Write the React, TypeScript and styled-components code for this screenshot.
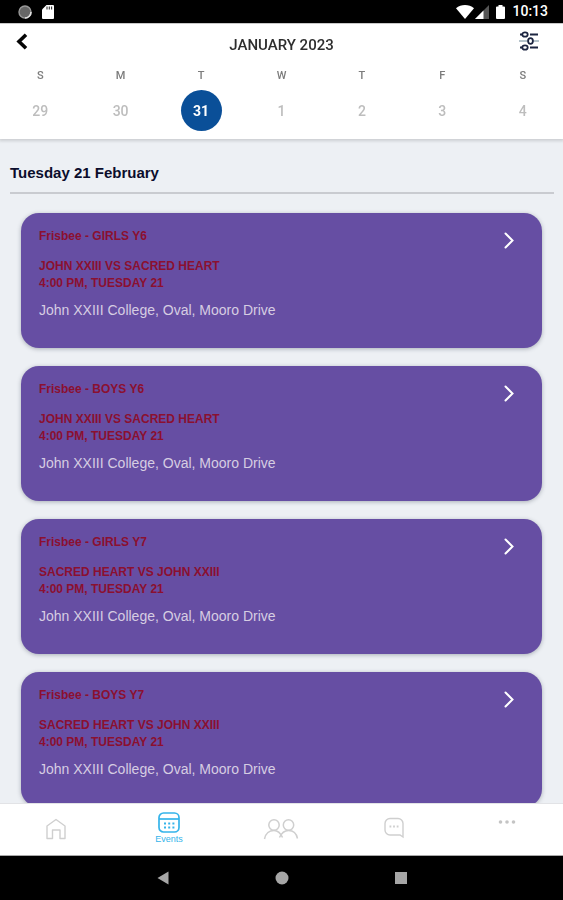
import React from "react";
import styled, { createGlobalStyle } from "styled-components";

const GlobalStyle = createGlobalStyle`
  * { box-sizing: border-box; }
  body { margin: 0; background: #edf0f4; }
  button { border: 0; padding: 0; background: none; font: inherit; color: inherit; cursor: pointer; }
  h1, h2, h3, p, ul { margin: 0; padding: 0; font-weight: inherit; }
  svg { display: block; }
`;

const Screen = styled.div`
  display: flex;
  flex-direction: column;
  height: 100vh;
  overflow: hidden;
  font-family: "Liberation Sans", Arial, sans-serif;
`;

const StatusBar = styled.div`
  flex: none;
  display: flex;
  align-items: center;
  justify-content: space-between;
  height: 23px;
  padding: 0 15px 0 18px;
  background: #000;
  color: #fff;
  font: 500 14px/23px Roboto, sans-serif;
`;

const StatusGroup = styled.div<{ $gap: number }>`
  display: flex;
  align-items: center;
  gap: ${(p) => p.$gap}px;
`;

const Header = styled.header`
  flex: none;
  position: relative;
  padding-bottom: 8px;
  background: #fff;
  font-family: Roboto, sans-serif;
  border-top: 1px solid #c8c8c8;
  box-shadow: 0 1px 3px 1px rgba(0, 0, 0, 0.14);
`;

const TitleRow = styled.div`
  display: grid;
  grid-template-columns: 40px 1fr 40px;
  align-items: center;
  height: 40px;
  padding: 0 14px 0 2px;
`;

const Title = styled.h1`
  padding-left: 12px;
  padding-top: 2px;
  font-size: 15px;
  font-weight: 500;
  line-height: 20px;
  text-align: center;
  color: #2e2e2e;
`;

const IconButton = styled.button`
  display: flex;
  justify-content: center;
  padding: 4px 0 10px;
`;

const Week = styled.div`
  display: grid;
  grid-template-columns: repeat(7, 1fr);
  justify-items: center;
`;

const Weekday = styled.span`
  padding: 1px 0 3px;
  font-size: 11px;
  font-weight: 500;
  line-height: 22px;
  color: #7c7c7c;
`;

const DayButton = styled.button<{ $selected: boolean }>`
  width: 41px;
  height: 41px;
  border-radius: 50%;
  background: ${(p) => (p.$selected ? "#0a4f98" : "transparent")};
  && {
    font-size: 14px;
    font-weight: ${(p) => (p.$selected ? 700 : 500)};
    color: ${(p) => (p.$selected ? "#fff" : "#bdbdbd")};
  }
`;

const Content = styled.main`
  flex: 1;
  min-height: 0;
  overflow-y: auto;
  scrollbar-width: none;
  padding: 20px 9px 0 10px;
  background: #edf0f4;
`;

const DateHeading = styled.h2`
  padding: 4px 0 9px;
  border-bottom: 2px solid #c9cbd0;
  font-size: 15px;
  font-weight: 700;
  line-height: 20px;
  color: #0b0d2c;
`;

const EventList = styled.ul`
  display: flex;
  flex-direction: column;
  gap: 18px;
  padding: 19px 12px 18px 11px;
  list-style: none;
`;

const Card = styled.button`
  display: flex;
  justify-content: space-between;
  align-items: flex-start;
  width: 100%;
  min-height: 135px;
  padding: 15px 26px 16px 18px;
  border-radius: 18px;
  background: #664ea3;
  text-align: left;
  box-shadow: 0 1px 4px rgba(40, 50, 70, 0.35);
`;

const CardText = styled.div`
  display: flex;
  flex-direction: column;
  min-width: 0;
`;

const Category = styled.h3`
  margin-bottom: 13px;
  font-size: 12px;
  font-weight: 700;
  line-height: 17px;
  color: #8b1030;
`;

const Fixture = styled.p`
  font-size: 12px;
  font-weight: 700;
  line-height: 17px;
  color: #8b1030;
`;

const Venue = styled.p`
  margin-top: 9px;
  font-size: 14px;
  line-height: 18px;
  color: #d6cde2;
`;

const ChevronSlot = styled.span`
  padding-top: 4px;
`;

const TabBar = styled.nav`
  flex: none;
  display: grid;
  grid-template-columns: repeat(5, 1fr);
  height: 53px;
  background: #fff;
  border-top: 1px solid #e2e3e6;
  border-bottom: 1px solid #a8a8a8;
`;

const Tab = styled.button<{ $active?: boolean }>`
  display: flex;
  flex-direction: column;
  align-items: center;
  justify-content: ${(p) => (p.$active ? "flex-start" : "center")};
  && {
    padding-top: ${(p) => (p.$active ? 8 : 0)}px;
    padding-bottom: ${(p) => (p.$active ? 0 : 2)}px;
    color: ${(p) => (p.$active ? "#35b4ea" : "#cfcfcf")};
    font-size: 9px;
    line-height: 12px;
  }
`;

const SystemBar = styled.div`
  flex: none;
  display: flex;
  align-items: center;
  justify-content: center;
  gap: 105px;
  height: 44px;
  background: #000;
`;

const BackIcon = () => (
  <svg width="12" height="17" viewBox="0 0 12 17" fill="none" stroke="#050505" strokeWidth="3.6">
    <path d="M10 1.8 3 8.5l7 6.7" />
  </svg>
);

const FilterIcon = () => (
  <svg width="20" height="20" viewBox="0 0 20 20" fill="none" strokeWidth="1.8">
    <path d="M1 3.5h2M11 3.5h8M1 16.5h2M11 16.5h8" stroke="#1c2541" />
    <path d="M0 10h9M14 10h6" stroke="#b5c3cb" strokeWidth="2" />
    <ellipse cx="6" cy="3.5" rx="2.7" ry="2.2" stroke="#1c2541" />
    <ellipse cx="11.5" cy="10" rx="2.4" ry="2.8" stroke="#1c2541" />
    <ellipse cx="6" cy="16.5" rx="2.7" ry="2.2" stroke="#1c2541" />
  </svg>
);

const ChevronIcon = () => (
  <svg width="13" height="17" viewBox="0 0 13 17" fill="none" stroke="#fff" strokeWidth="2" strokeLinecap="round">
    <path d="M2.5 1.5 9.5 8.5l-7 7" />
  </svg>
);

const SpinnerIcon = () => (
  <svg width="14" height="14" viewBox="0 0 14 14">
    <circle cx="7" cy="7" r="6" fill="#666" stroke="#999" strokeWidth="1.4" />
    <path d="M13 7a6 6 0 0 1-6 6" fill="none" stroke="#e0e0e0" strokeWidth="1.6" />
  </svg>
);

const CardStorageIcon = () => (
  <svg width="12" height="14" viewBox="0 0 12 14">
    <path d="M4.5 0H11a1 1 0 0 1 1 1v12a1 1 0 0 1-1 1H1a1 1 0 0 1-1-1V4.5z" fill="#fff" />
    <path d="M5 1.5v3M7.3 1.5v3M9.6 1.5v3" stroke="#333" strokeWidth="1.1" />
  </svg>
);

const WifiIcon = () => (
  <svg width="18" height="14" viewBox="0 0 18 14">
    <path d="M0 3.2C5-1 13-1 18 3.2L9 14z" fill="#fff" />
  </svg>
);

const SignalIcon = () => (
  <svg width="14" height="14" viewBox="0 0 14 14">
    <path d="M0 14 14 0v14z" fill="#555" />
    <path d="M0 14 8.5 5.5V14z" fill="#fff" />
  </svg>
);

const BatteryIcon = () => (
  <svg width="9" height="14" viewBox="0 0 9 14">
    <path d="M2.5 0h4v1.5H8a1 1 0 0 1 1 1V13a1 1 0 0 1-1 1H1a1 1 0 0 1-1-1V2.5a1 1 0 0 1 1-1h1.5z" fill="#fff" />
  </svg>
);

const HomeIcon = () => (
  <svg width="20" height="22" viewBox="0 0 20 22" fill="none" stroke="currentColor" strokeWidth="1.4" strokeLinejoin="round">
    <path d="M1 8 10 1.5l9 6.5v12.5h-5v-8.5h-7.5v8.5h-5.5z" />
  </svg>
);

const CalendarIcon = () => (
  <svg width="22" height="21" viewBox="0 0 22 21" fill="none" stroke="currentColor" strokeWidth="1.7">
    <rect x="1" y="1" width="20" height="19" rx="4.5" />
    <path d="M1 7h20" />
    <path d="M6 11.5h10.5M6 15.5h10.5" strokeWidth="2.2" strokeDasharray="2 2.2" />
  </svg>
);

const PeopleIcon = () => (
  <svg width="36" height="22" viewBox="0 0 36 22" fill="none" stroke="currentColor" strokeWidth="1.5">
    <circle cx="11" cy="7" r="5.2" />
    <circle cx="25.5" cy="7" r="5.2" />
    <path d="M1.5 21c1-5.5 5-8.5 9.5-8.5 3.5 0 6.5 2.5 8.5 7" />
    <path d="M16.5 19.5c2-4.5 5.2-7 9-7 4.5 0 8 3 9 8" />
  </svg>
);

const ChatIcon = () => (
  <svg width="20" height="24" viewBox="0 0 20 24" fill="none" stroke="currentColor" strokeWidth="1.4">
    <path d="M6 1.5h8a5 5 0 0 1 5 5v13.5l-3-2H6a5 5 0 0 1-5-5v-6.5a5 5 0 0 1 5-5z" />
    <path d="M5.5 9.5h9" strokeWidth="1.8" strokeDasharray="1.8 1.8" />
  </svg>
);

const MoreIcon = () => (
  <svg width="18" height="20" viewBox="0 0 18 20" fill="#c4c4c4">
    <circle cx="2.5" cy="3" r="1.8" />
    <circle cx="9" cy="3" r="1.8" />
    <circle cx="15.5" cy="3" r="1.8" />
  </svg>
);

const SystemBackIcon = () => (
  <svg width="14" height="14" viewBox="0 0 14 14">
    <path d="M1.5 7 12.5 .5v13z" fill="#a6a6a6" />
  </svg>
);

const SystemHomeIcon = () => (
  <svg width="14" height="14" viewBox="0 0 14 14">
    <circle cx="7" cy="7" r="6.5" fill="#a6a6a6" />
  </svg>
);

const SystemRecentIcon = () => (
  <svg width="14" height="14" viewBox="0 0 14 14">
    <rect x="1" y="1" width="12" height="12" fill="#a6a6a6" />
  </svg>
);

const weekdays = ["S", "M", "T", "W", "T", "F", "S"];
const days = [29, 30, 31, 1, 2, 3, 4];
const selectedDay = 31;

const events = [
  { category: "Frisbee - GIRLS Y6", teams: "JOHN XXIII VS SACRED HEART" },
  { category: "Frisbee - BOYS Y6", teams: "JOHN XXIII VS SACRED HEART" },
  { category: "Frisbee - GIRLS Y7", teams: "SACRED HEART VS JOHN XXIII" },
  { category: "Frisbee - BOYS Y7", teams: "SACRED HEART VS JOHN XXIII" },
];

export default function App() {
  return (
    <Screen>
      <GlobalStyle />
      <StatusBar>
        <StatusGroup $gap={10}>
          <SpinnerIcon />
          <CardStorageIcon />
        </StatusGroup>
        <StatusGroup $gap={7}>
          <StatusGroup $gap={1}>
            <WifiIcon />
            <SignalIcon />
          </StatusGroup>
          <BatteryIcon />
          <span>10:13</span>
        </StatusGroup>
      </StatusBar>

      <Header>
        <TitleRow>
          <IconButton aria-label="Back">
            <BackIcon />
          </IconButton>
          <Title>JANUARY 2023</Title>
          <IconButton aria-label="Filter events">
            <FilterIcon />
          </IconButton>
        </TitleRow>
        <Week>
          {weekdays.map((d, i) => (
            <Weekday key={i}>{d}</Weekday>
          ))}
          {days.map((d) => (
            <DayButton key={d} $selected={d === selectedDay} aria-pressed={d === selectedDay}>
              {d}
            </DayButton>
          ))}
        </Week>
      </Header>

      <Content>
        <DateHeading>Tuesday 21 February</DateHeading>
        <EventList>
          {events.map((e) => (
            <li key={e.category}>
              <Card>
                <CardText>
                  <Category>{e.category}</Category>
                  <Fixture>{e.teams}</Fixture>
                  <Fixture>4:00 PM, TUESDAY 21</Fixture>
                  <Venue>John XXIII College, Oval, Mooro Drive</Venue>
                </CardText>
                <ChevronSlot>
                  <ChevronIcon />
                </ChevronSlot>
              </Card>
            </li>
          ))}
        </EventList>
      </Content>

      <TabBar>
        <Tab aria-label="Home">
          <HomeIcon />
        </Tab>
        <Tab $active aria-current="page">
          <CalendarIcon />
          Events
        </Tab>
        <Tab aria-label="People">
          <PeopleIcon />
        </Tab>
        <Tab aria-label="Messages">
          <ChatIcon />
        </Tab>
        <Tab aria-label="More">
          <MoreIcon />
        </Tab>
      </TabBar>

      <SystemBar>
        <button aria-label="System back">
          <SystemBackIcon />
        </button>
        <button aria-label="System home">
          <SystemHomeIcon />
        </button>
        <button aria-label="Recent apps">
          <SystemRecentIcon />
        </button>
      </SystemBar>
    </Screen>
  );
}
